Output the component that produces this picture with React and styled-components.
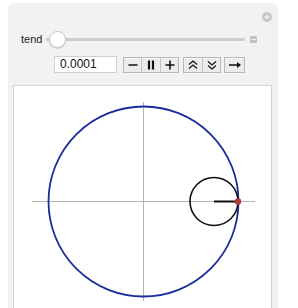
import React from 'react'
import styled, { createGlobalStyle } from 'styled-components'

const GlobalStyle = createGlobalStyle`
  html, body {
    margin: 0;
    padding: 0;
    background: #ffffff;
    overflow: hidden;
  }
  body {
    font-family: "Liberation Sans", Arial, sans-serif;
  }
`

const Panel = styled.div`
  margin: 3px 0 0 8px;
  width: 270px;
  height: 305px;
  box-sizing: border-box;
  background: #f2f2f2;
  border-radius: 6px 6px 0 0;
  padding: 0 6px 0 5px;
  display: flex;
  flex-direction: column;
  overflow: hidden;
`

const TopBar = styled.div`
  display: flex;
  justify-content: flex-end;
  padding-top: 9px;
  height: 10px;
`

const SliderRow = styled.div`
  display: flex;
  align-items: center;
  height: 16px;
  margin-top: 11px;
  padding-left: 8px;
`

const Label = styled.span`
  font-size: 11px;
  color: #222;
  width: 25px;
`

const Track = styled.div`
  position: relative;
  width: 199px;
  height: 3px;
  background: #cdcdcd;
  border-radius: 2px;
`

const Thumb = styled.div`
  position: absolute;
  left: 3px;
  top: -7px;
  width: 15px;
  height: 15px;
  border-radius: 50%;
  background: #ffffff;
  border: 1px solid #c4c4c4;
  box-shadow: 0 1px 1px rgba(0, 0, 0, 0.12);
`

const MiniButton = styled.div`
  margin-left: 5px;
  width: 7px;
  height: 7px;
  border-radius: 1px;
  background: #c2c2c2;
  display: flex;
  align-items: center;
  justify-content: center;
  &::after {
    content: '';
    width: 5px;
    height: 1px;
    background: #f2f2f2;
  }
`

const ControlsRow = styled.div`
  display: flex;
  align-items: center;
  margin-top: 11px;
  padding-left: 41px;
  height: 17px;
`

const Field = styled.div`
  width: 63px;
  height: 17px;
  box-sizing: border-box;
  background: #ffffff;
  border: 1px solid #d0d0d0;
  font-size: 12px;
  color: #111;
  padding-left: 5px;
  line-height: 15px;
  margin-right: 6px;
`

const Group = styled.div`
  display: flex;
  height: 16px;
  margin-right: ${p => p.$gap}px;
  border: 1px solid #b8b8b8;
  box-sizing: border-box;
  background: #ececec;
`

const Btn = styled.div`
  width: ${p => p.$w}px;
  height: 100%;
  display: flex;
  align-items: center;
  justify-content: center;
  border-left: 1px solid #c4c4c4;
  box-shadow: inset 0 1px 0 #fafafa;
  &:first-child {
    border-left: none;
  }
`

const Plot = styled.div`
  margin-top: 12px;
  height: 230px;
  box-sizing: border-box;
  background: #ffffff;
  border: 1px solid #d4d4d4;
`

const Icon = ({ children }) => (
  <svg width="12" height="12" viewBox="0 0 12 12" fill="none" stroke="#111" strokeWidth="1.6">
    {children}
  </svg>
)

const App = () => (
  <>
    <GlobalStyle />
    <Panel>
      <TopBar>
        <svg width="10" height="10" viewBox="0 0 10 10">
          <circle cx="5" cy="5" r="5" fill="#c6c6c6" />
          <path d="M5 2.5v5M2.5 5h5" stroke="#f2f2f2" strokeWidth="1.4" />
        </svg>
      </TopBar>
      <SliderRow>
        <Label>tend</Label>
        <Track>
          <Thumb />
        </Track>
        <MiniButton />
      </SliderRow>
      <ControlsRow>
        <Field>0.0001</Field>
        <Group $gap={4}>
          <Btn $w={17}>
            <Icon><path d="M1.5 6h9" /></Icon>
          </Btn>
          <Btn $w={18}>
            <Icon><path d="M4 1.5v9M8 1.5v9" strokeWidth="2.2" /></Icon>
          </Btn>
          <Btn $w={17}>
            <Icon><path d="M1.5 6h9M6 1.5v9" /></Icon>
          </Btn>
        </Group>
        <Group $gap={3}>
          <Btn $w={18}>
            <Icon><path d="M2 5.5l4-3.5 4 3.5M2 9.5l4-3.5 4 3.5" strokeWidth="1.2" /></Icon>
          </Btn>
          <Btn $w={17}>
            <Icon><path d="M2 2.5l4 3.5 4-3.5M2 6.5l4 3.5 4-3.5" strokeWidth="1.2" /></Icon>
          </Btn>
        </Group>
        <Group $gap={0}>
          <Btn $w={19}>
            <svg width="14" height="12" viewBox="0 0 14 12">
              <path d="M1 6h9" stroke="#111" strokeWidth="1.6" />
              <path d="M9 3l4 3-4 3z" fill="#111" />
            </svg>
          </Btn>
        </Group>
      </ControlsRow>
      <Plot>
        <svg width="257" height="228" viewBox="0 0 257 228">
          <path d="M18 115.5H241M129.5 16V215" stroke="#b4b4b4" strokeWidth="1" />
          <circle cx="129.5" cy="115.5" r="95" fill="none" stroke="#1b2a9c" strokeWidth="1.8" />
          <circle cx="200" cy="115.5" r="24" fill="none" stroke="#111" strokeWidth="1.6" />
          <path d="M200 115.5H224" stroke="#111" strokeWidth="2" />
          <circle cx="224" cy="115.5" r="3.2" fill="#b43a3a" />
        </svg>
      </Plot>
    </Panel>
  </>
)

export default App
